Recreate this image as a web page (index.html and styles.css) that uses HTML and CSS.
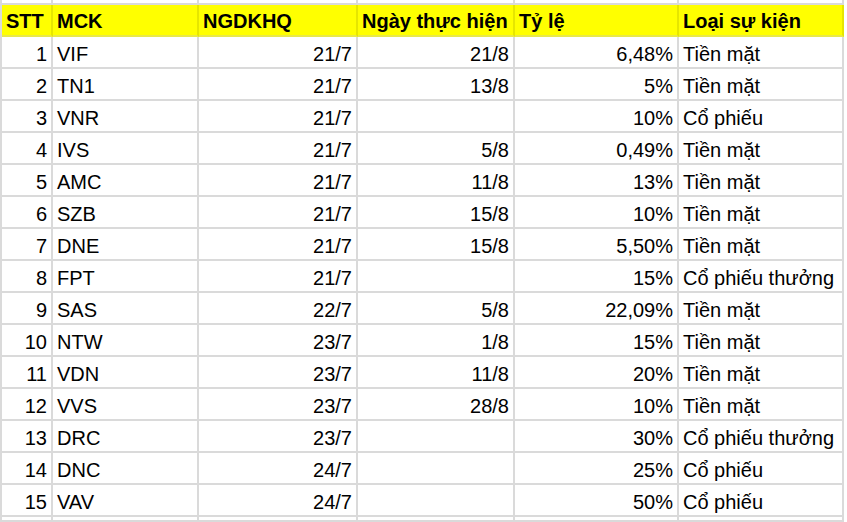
FILE: index.html
```html
<!DOCTYPE html>
<html lang="vi">
<head>
<meta charset="utf-8">
<title>Lịch sự kiện</title>
<link rel="stylesheet" href="styles.css">
</head>
<body>
<div class="sheet">
  <div class="c blank"></div><div class="c blank"></div><div class="c blank"></div><div class="c blank"></div><div class="c blank"></div><div class="c blank"></div>

  <div class="c h">STT</div><div class="c h">MCK</div><div class="c h">NGDKHQ</div><div class="c h">Ngày thực hiện</div><div class="c h">Tỷ lệ</div><div class="c h">Loại sự kiện</div>

  <div class="c r">1</div><div class="c">VIF</div><div class="c r">21/7</div><div class="c r">21/8</div><div class="c r">6,48%</div><div class="c">Tiền mặt</div>
  <div class="c r">2</div><div class="c">TN1</div><div class="c r">21/7</div><div class="c r">13/8</div><div class="c r">5%</div><div class="c">Tiền mặt</div>
  <div class="c r">3</div><div class="c">VNR</div><div class="c r">21/7</div><div class="c r"></div><div class="c r">10%</div><div class="c">Cổ phiếu</div>
  <div class="c r">4</div><div class="c">IVS</div><div class="c r">21/7</div><div class="c r">5/8</div><div class="c r">0,49%</div><div class="c">Tiền mặt</div>
  <div class="c r">5</div><div class="c">AMC</div><div class="c r">21/7</div><div class="c r">11/8</div><div class="c r">13%</div><div class="c">Tiền mặt</div>
  <div class="c r">6</div><div class="c">SZB</div><div class="c r">21/7</div><div class="c r">15/8</div><div class="c r">10%</div><div class="c">Tiền mặt</div>
  <div class="c r">7</div><div class="c">DNE</div><div class="c r">21/7</div><div class="c r">15/8</div><div class="c r">5,50%</div><div class="c">Tiền mặt</div>
  <div class="c r">8</div><div class="c">FPT</div><div class="c r">21/7</div><div class="c r"></div><div class="c r">15%</div><div class="c">Cổ phiếu thưởng</div>
  <div class="c r">9</div><div class="c">SAS</div><div class="c r">22/7</div><div class="c r">5/8</div><div class="c r">22,09%</div><div class="c">Tiền mặt</div>
  <div class="c r">10</div><div class="c">NTW</div><div class="c r">23/7</div><div class="c r">1/8</div><div class="c r">15%</div><div class="c">Tiền mặt</div>
  <div class="c r">11</div><div class="c">VDN</div><div class="c r">23/7</div><div class="c r">11/8</div><div class="c r">20%</div><div class="c">Tiền mặt</div>
  <div class="c r">12</div><div class="c">VVS</div><div class="c r">23/7</div><div class="c r">28/8</div><div class="c r">10%</div><div class="c">Tiền mặt</div>
  <div class="c r">13</div><div class="c">DRC</div><div class="c r">23/7</div><div class="c r"></div><div class="c r">30%</div><div class="c">Cổ phiếu thưởng</div>
  <div class="c r">14</div><div class="c">DNC</div><div class="c r">24/7</div><div class="c r"></div><div class="c r">25%</div><div class="c">Cổ phiếu</div>
  <div class="c r">15</div><div class="c">VAV</div><div class="c r">24/7</div><div class="c r"></div><div class="c r">50%</div><div class="c">Cổ phiếu</div>

  <div class="c tail"></div><div class="c tail"></div><div class="c tail"></div><div class="c tail"></div><div class="c tail"></div><div class="c tail"></div>
</div>
</body>
</html>
```
FILE: styles.css
```css
html, body {
  margin: 0;
  padding: 0;
  background: #ffffff;
  overflow: hidden;
}

.sheet {
  display: grid;
  grid-template-columns: 51px 146px 159px 157px 164px 165px;
  grid-template-rows: repeat(17, 32px) 5px;
  width: max-content;
  margin-top: -27px;
  border-left: 2px solid #dadada;
  font-family: "Liberation Sans", Arial, sans-serif;
  font-size: 20px;
  color: #000000;
}

.c {
  box-sizing: border-box;
  border-right: 2px solid #dadada;
  border-bottom: 2px solid #dadada;
  padding: 0 4px 1px 4px;
  line-height: 23px;
  display: flex;
  align-items: flex-end;
  justify-content: flex-start;
  white-space: nowrap;
  overflow: hidden;
}

.r {
  justify-content: flex-end;
}

.h {
  background: #ffff00;
  font-weight: bold;
  padding-bottom: 2px;
  border-right-color: #e6e600;
  border-bottom-color: #e8e84a;
}

.tail {
  padding: 0;
}
```
